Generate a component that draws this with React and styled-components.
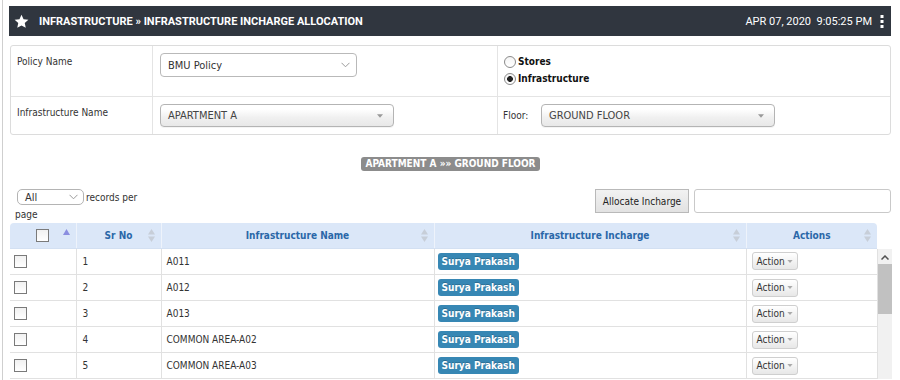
import React from 'react';
import styled, { createGlobalStyle } from 'styled-components';

const BODY_FONT = '"DejaVu Sans Condensed", "DejaVu Sans", Verdana, sans-serif';

const GlobalStyle = createGlobalStyle`
  html, body { margin: 0; padding: 0; background: #fff; }
  body {
    font-family: ${BODY_FONT};
    font-size: 10px;
    color: #333;
    overflow: hidden;
  }
  * { box-sizing: border-box; }
`;

const Frame = styled.div`
  margin-left: 2px;
  border-left: 1px solid #cfcfcf;
  height: 380px;
  padding: 6px 9px 0 6px;
  overflow: hidden;
`;

const TopBar = styled.header`
  height: 30px;
  background: #30363f;
  display: flex;
  align-items: center;
  padding: 0 7px 0 5px;
  color: #fff;
`;

const Title = styled.h1`
  flex: 1;
  margin: 0 0 0 10px;
  font: 700 11px Roboto, "Liberation Sans", sans-serif;
  letter-spacing: 0;
  text-transform: uppercase;
`;

const Clock = styled.div`
  font: 400 11px Roboto, "Liberation Sans", sans-serif;
  white-space: pre;
  margin-right: 8px;
`;

const Content = styled.main`
  padding-left: 1px;
`;

const Panel = styled.section`
  margin-top: 9px;
  border: 1px solid #dcdcdc;
  border-radius: 3px;
  display: grid;
  grid-template-columns: 142px 345px 1fr;
  grid-template-rows: 51px 37px;
`;

const Cell = styled.div`
  border-right: ${(p) => (p.$last ? 'none' : '1px solid #e4e4e4')};
  border-bottom: ${(p) => (p.$top ? '1px solid #e4e4e4' : 'none')};
`;

const LabelCell = styled(Cell)`
  padding: 10px 0 0 6px;
  line-height: 12px;
`;

const FieldCell = styled(Cell)`
  padding: 7px 0 0 7px;
`;

const RadioCell = styled(Cell)`
  padding: 7px 0 0 6px;
  display: flex;
  flex-direction: column;
`;

const FloorCell = styled(Cell)`
  padding: 7px 0 0 5px;
  display: flex;
  align-items: flex-start;
`;

const FloorLabel = styled.span`
  width: 38px;
  line-height: 23px;
`;

const NativeSelect = styled.div`
  width: ${(p) => p.$w}px;
  height: 24px;
  border: 1px solid #b9b9b9;
  border-radius: 4px;
  background: #fff;
  display: flex;
  align-items: center;
  justify-content: space-between;
  padding: 0 6px 0 7px;
  font-size: 11px;
  color: #333;
`;

const ChosenSelect = styled.div`
  width: ${(p) => p.$w}px;
  height: 23px;
  border: 1px solid #b4b4b4;
  border-radius: 4px;
  background: linear-gradient(#ffffff 20%, #f0f0f0 60%, #e8e8e8);
  display: flex;
  align-items: center;
  justify-content: space-between;
  padding: 0 10px 0 7px;
  font-size: 11px;
  color: #444;
  box-shadow: 0 1px 0 #f4f4f4;
`;

const RadioRow = styled.label`
  display: flex;
  align-items: center;
  height: 17px;
  font-weight: 700;
  color: #111;
  gap: 2px;
`;

const RadioDot = styled.span`
  width: 12px;
  height: 12px;
  border-radius: 50%;
  border: 1px solid #8a8a8a;
  background: radial-gradient(circle, ${(p) => (p.$on ? '#222 0 2.6px, transparent 3.2px' : 'transparent 0')}), linear-gradient(#f4f4f4, #fff);
  display: inline-block;
`;

const SectionTitle = styled.div`
  margin-top: 22px;
  text-align: center;
  height: 14px;
`;

const SectionBadge = styled.span`
  display: inline-block;
  background: #8c8c8c;
  color: #fff;
  font-weight: 700;
  font-size: 10px;
  height: 14px;
  line-height: 14px;
  padding: 0 4px;
  border-radius: 3px;
`;

const Toolbar = styled.div`
  margin-top: 18px;
  height: 34px;
  display: flex;
  justify-content: space-between;
  align-items: flex-start;
`;

const LengthLabel = styled.label`
  width: 136px;
  padding-left: 5px;
  line-height: 17px;
  font-size: 10px;
`;

const SmallSelect = styled.span`
  display: inline-flex;
  align-items: center;
  justify-content: space-between;
  vertical-align: middle;
  margin: -2px 2px 0 2px;
  width: 67px;
  height: 16px;
  border: 1px solid #b4b4b4;
  border-radius: 5px;
  padding: 0 5px 0 7px;
  font-size: 11px;
`;

const RightTools = styled.div`
  display: flex;
  gap: 5px;
`;

const GrayButton = styled.button`
  width: 94px;
  height: 24px;
  border: 1px solid #b9b9b9;
  background: linear-gradient(#f2f2f2, #e2e2e2);
  font: 400 10px ${BODY_FONT};
  color: #222;
  padding: 0;
`;

const SearchInput = styled.input`
  width: 197px;
  height: 24px;
  border: 1px solid #c9c9c9;
  border-radius: 3px;
  outline: none;
`;

const TableWrap = styled.div`
  width: 881px;
`;

const HeadTable = styled.table`
  width: 867px;
  table-layout: fixed;
  border-collapse: collapse;
`;

const Th = styled.th`
  position: relative;
  height: 25px;
  padding: 0;
  background: #dbe7f8;
  color: #2a67a8;
  font-size: 10px;
  font-weight: 700;
  text-align: center;
  border-left: 1px solid #eef3fb;
  border-bottom: 1px solid #d3e0f2;
  &:first-child { border-left: none; border-top-left-radius: 4px; }
  &:last-child { border-top-right-radius: 4px; }
`;

const SortIcon = styled.svg`
  position: absolute;
  right: 6px;
  top: 6px;
`;

const BodyRow = styled.div`
  display: flex;
  align-items: stretch;
`;

const BodyTable = styled.table`
  width: 867px;
  table-layout: fixed;
  border-collapse: collapse;
`;

const Td = styled.td`
  height: 26px;
  padding: 0 0 0 ${(p) => p.$pl || 5}px;
  border: 1px solid #e1e1e1;
  border-top: none;
  font-size: 10px;
  color: #333;
  &:first-child { border-left: none; }
`;

const Check = styled.span`
  display: inline-block;
  vertical-align: middle;
  width: 13px;
  height: 13px;
  border: 1px solid #7a7a7a;
  background: linear-gradient(#f1f1f1, #fff);
`;

const PersonBadge = styled.span`
  display: inline-block;
  background: #3787b4;
  color: #fff;
  font-weight: 700;
  font-size: 10px;
  height: 17px;
  line-height: 17px;
  padding: 0 4px;
  border-radius: 3px;
  text-shadow: 0 -1px 0 rgba(0, 0, 0, 0.2);
`;

const ActionBtn = styled.span`
  display: inline-flex;
  align-items: center;
  gap: 2px;
  height: 18px;
  padding: 0 4px;
  border: 1px solid #cfcfcf;
  border-radius: 3px;
  background: linear-gradient(#ffffff, #e7e7e7);
  font-size: 10px;
  color: #333;
`;

const ScrollTrack = styled.div`
  width: 14px;
  background: #f1f1f1;
  display: flex;
  flex-direction: column;
  align-items: center;
`;

const ScrollArrow = styled.div`
  height: 15px;
  display: flex;
  align-items: center;
  justify-content: center;
  padding-top: 2px;
`;

const ScrollThumb = styled.div`
  width: 14px;
  height: 50px;
  background: #c1c1c1;
`;

const Star = () => (
  <svg width="15" height="15" viewBox="0 0 24 24">
    <path
      fill="#fff"
      d="M12 1.2l3.3 7.1 7.7.9-5.8 5.2 1.6 7.7L12 18.2l-6.8 3.9 1.6-7.7L1 9.2l7.7-.9z"
    />
  </svg>
);

const Kebab = () => (
  <svg width="4" height="13" viewBox="0 0 4 13">
    <rect x="0.5" y="0" width="3" height="3" fill="#fff" />
    <rect x="0.5" y="5" width="3" height="3" fill="#fff" />
    <rect x="0.5" y="10" width="3" height="3" fill="#fff" />
  </svg>
);

const ThinChevron = () => (
  <svg width="9" height="6" viewBox="0 0 9 6">
    <path d="M0.5 0.8L4.5 4.8 8.5 0.8" fill="none" stroke="#9a9a9a" strokeWidth="1" />
  </svg>
);

const SolidCaret = ({ color = '#888', w = 7, h = 4 }) => (
  <svg width={w} height={h} viewBox="0 0 7 4">
    <path d="M0 0h7L3.5 4z" fill={color} />
  </svg>
);

const SortBoth = () => (
  <SortIcon width="7" height="13" viewBox="0 0 7 13">
    <path d="M0 5.5L3.5 0 7 5.5z" fill="#c7ced8" />
    <path d="M0 7.5L3.5 13 7 7.5z" fill="#c7ced8" />
  </SortIcon>
);

const SortAsc = () => (
  <SortIcon width="7" height="6" viewBox="0 0 7 6">
    <path d="M0 6L3.5 0 7 6z" fill="#8b8ee0" />
  </SortIcon>
);

const rows = [
  ['1', 'A011'],
  ['2', 'A012'],
  ['3', 'A013'],
  ['4', 'COMMON AREA-A02'],
  ['5', 'COMMON AREA-A03'],
];

const Cols = () => (
  <colgroup>
    <col style={{ width: 66 }} />
    <col style={{ width: 85 }} />
    <col style={{ width: 273 }} />
    <col style={{ width: 312 }} />
    <col style={{ width: 131 }} />
  </colgroup>
);

export default function App() {
  return (
    <>
      <GlobalStyle />
      <Frame>
        <TopBar>
          <Star />
          <Title>Infrastructure » Infrastructure Incharge Allocation</Title>
          <Clock>{'APR 07, 2020  9:05:25 PM'}</Clock>
          <Kebab />
        </TopBar>
        <Content>
          <Panel>
            <LabelCell $top>Policy Name</LabelCell>
            <FieldCell $top>
              <NativeSelect $w={197}>
                <span>BMU Policy</span>
                <ThinChevron />
              </NativeSelect>
            </FieldCell>
            <RadioCell $top $last>
              <RadioRow>
                <RadioDot />
                Stores
              </RadioRow>
              <RadioRow>
                <RadioDot $on />
                Infrastructure
              </RadioRow>
            </RadioCell>
            <LabelCell>Infrastructure Name</LabelCell>
            <FieldCell>
              <ChosenSelect $w={234}>
                <span>APARTMENT A</span>
                <SolidCaret color="#999" w={6} h={4} />
              </ChosenSelect>
            </FieldCell>
            <FloorCell $last>
              <FloorLabel>Floor:</FloorLabel>
              <ChosenSelect $w={234}>
                <span>GROUND FLOOR</span>
                <SolidCaret color="#999" w={6} h={4} />
              </ChosenSelect>
            </FloorCell>
          </Panel>

          <SectionTitle>
            <SectionBadge>APARTMENT A »» GROUND FLOOR</SectionBadge>
          </SectionTitle>

          <Toolbar>
            <LengthLabel>
              <SmallSelect>
                <span>All</span>
                <ThinChevron />
              </SmallSelect>
              records per page
            </LengthLabel>
            <RightTools>
              <GrayButton>Allocate Incharge</GrayButton>
              <SearchInput aria-label="search" />
            </RightTools>
          </Toolbar>

          <TableWrap>
            <HeadTable>
              <Cols />
              <thead>
                <tr>
                  <Th>
                    <Check />
                    <SortAsc />
                  </Th>
                  <Th>
                    Sr No
                    <SortBoth />
                  </Th>
                  <Th>
                    Infrastructure Name
                    <SortBoth />
                  </Th>
                  <Th>
                    Infrastructure Incharge
                    <SortBoth />
                  </Th>
                  <Th>
                    Actions
                    <SortBoth />
                  </Th>
                </tr>
              </thead>
            </HeadTable>
            <BodyRow>
              <BodyTable>
                <Cols />
                <tbody>
                  {rows.map(([n, name]) => (
                    <tr key={n}>
                      <Td $pl={4}>
                        <Check />
                      </Td>
                      <Td $pl={6}>{n}</Td>
                      <Td $pl={5}>{name}</Td>
                      <Td $pl={3}>
                        <PersonBadge>Surya Prakash</PersonBadge>
                      </Td>
                      <Td $pl={5}>
                        <ActionBtn>
                          Action
                          <SolidCaret color="#aaa" w={6} h={3} />
                        </ActionBtn>
                      </Td>
                    </tr>
                  ))}
                </tbody>
              </BodyTable>
              <ScrollTrack>
                <ScrollArrow>
                  <svg width="8" height="5" viewBox="0 0 8 5">
                    <path d="M0.5 4.5L4 1 7.5 4.5" fill="none" stroke="#505050" strokeWidth="1.5" />
                  </svg>
                </ScrollArrow>
                <ScrollThumb />
              </ScrollTrack>
            </BodyRow>
          </TableWrap>
        </Content>
      </Frame>
    </>
  );
}
